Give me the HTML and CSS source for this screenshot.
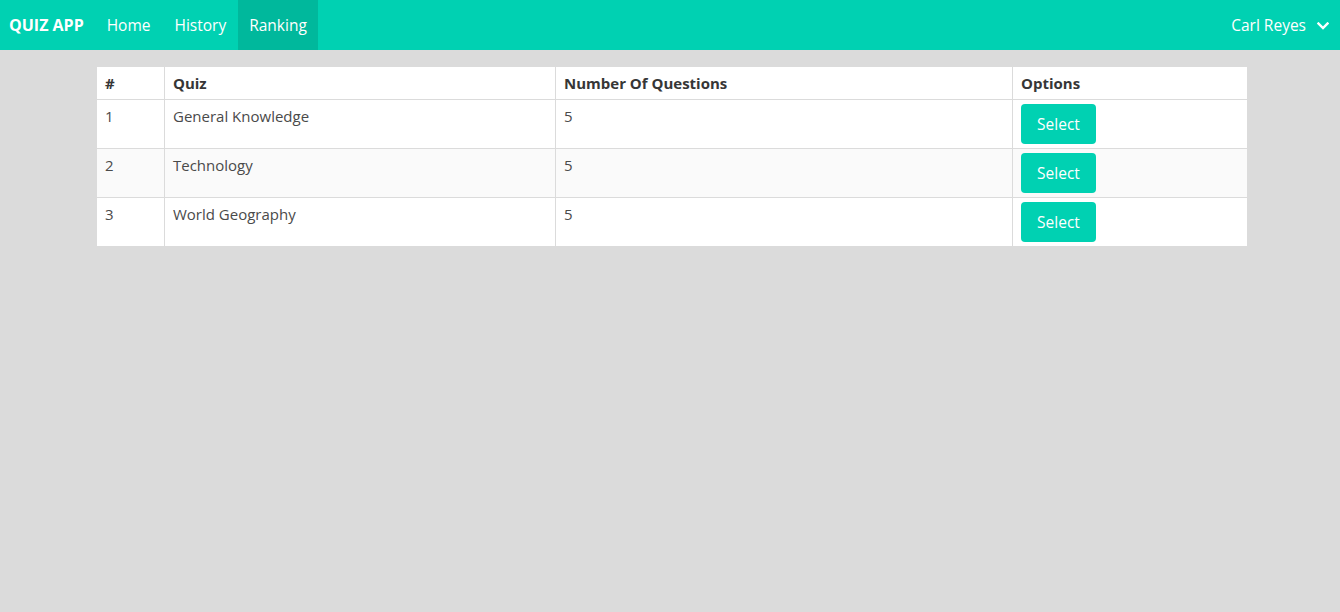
FILE: index.html
```html
<!DOCTYPE html>
<html>
<head>
<meta charset="utf-8">
<link rel="stylesheet" href="styles.css">
</head>
<body>
<nav class="navbar">
  <div class="nav-start">
    <a class="nav-item brand">QUIZ APP</a>
    <a class="nav-item">Home</a>
    <a class="nav-item">History</a>
    <a class="nav-item active">Ranking</a>
  </div>
  <div class="nav-end">
    <a class="nav-item user">Carl Reyes
      <svg class="chevron" width="12" height="8" viewBox="0 0 12 8"><path d="M1.5 1.5 L6 6 L10.5 1.5" fill="none" stroke="#fff" stroke-width="2.4" stroke-linecap="square"/></svg>
    </a>
  </div>
</nav>
<main class="content">
  <table class="table">
    <colgroup>
      <col class="c1"><col class="c2"><col class="c3"><col class="c4">
    </colgroup>
    <thead>
      <tr><th>#</th><th>Quiz</th><th>Number Of Questions</th><th>Options</th></tr>
    </thead>
    <tbody>
      <tr><td>1</td><td>General Knowledge</td><td>5</td><td><button class="btn">Select</button></td></tr>
      <tr class="odd"><td>2</td><td>Technology</td><td>5</td><td><button class="btn">Select</button></td></tr>
      <tr><td>3</td><td>World Geography</td><td>5</td><td><button class="btn">Select</button></td></tr>
    </tbody>
  </table>
</main>
</body>
</html>
```
FILE: styles.css
```css
html, body {
  margin: 0;
  padding: 0;
}
body {
  background: #dbdbdb;
  font-family: "Open Sans", "Noto Sans", sans-serif;
  font-size: 15px;
  color: #4a4a4a;
  height: 612px;
}
.navbar {
  height: 50px;
  background: #00d1b2;
  display: flex;
  justify-content: space-between;
  align-items: stretch;
}
.nav-start, .nav-end {
  display: flex;
  align-items: stretch;
}
.nav-item {
  display: flex;
  align-items: center;
  padding: 0 12px;
  color: #fff;
  font-size: 15.5px;
}
.brand {
  font-weight: 700;
  font-size: 16px;
  padding-left: 9px;
  padding-right: 11px;
}
.nav-item.active {
  background: #00b89c;
  padding: 0 11px 0 11px;
}
.user {
  padding-right: 11px;
}
.chevron {
  margin-left: 11px;
  margin-top: 2px;
}
.content {
  padding: 16px 0 0 96px;
}
.table {
  width: 1151px;
  border-collapse: collapse;
  background: #fff;
  table-layout: fixed;
}
.c1 { width: 68px; }
.c2 { width: 391px; }
.c3 { width: 457px; }
.c4 { width: 235px; }
.table th, .table td {
  border: 1px solid #dbdbdb;
  padding: 4px 8px;
  text-align: left;
  vertical-align: top;
  line-height: 24px;
}
.table th {
  color: #363636;
  font-weight: 700;
}
.odd td {
  background: #fafafa;
}
.btn {
  display: block;
  height: 40px;
  width: 75px;
  border: none;
  border-radius: 4px;
  background: #00d1b2;
  color: #fff;
  font-family: inherit;
  font-size: 15.5px;
  padding: 0;
}
```
